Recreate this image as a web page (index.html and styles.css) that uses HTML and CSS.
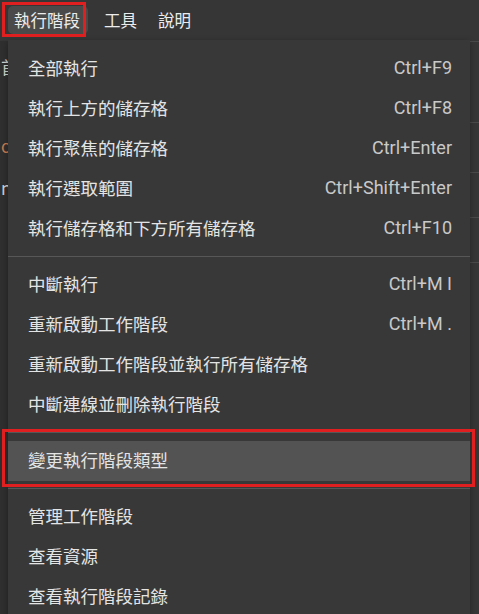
FILE: index.html
```html
<!DOCTYPE html>
<html lang="zh-Hant">
<head>
<meta charset="utf-8">
<link rel="stylesheet" href="styles.css">
</head>
<body>
<div class="app">
  <nav class="menubar">
    <span class="mb-item active">執行階段</span>
    <span class="mb-item">工具</span>
    <span class="mb-item">說明</span>
  </nav>
  <div class="page">
    <div class="gutter"></div>
    <div class="cells">
      <div class="cell c1"><span class="peek">首</span></div>
      <div class="cell c2"><span class="peek orange">o</span></div>
      <div class="cell c3"><span class="peek">n</span></div>
      <div class="cell c4"></div>
      <div class="cell c5"></div>
    </div>
  </div>

  <div class="annot annot-top"></div>

  <div class="menu">
    <div class="group">
      <div class="item"><span>全部執行</span><span class="key">Ctrl+F9</span></div>
      <div class="item"><span>執行上方的儲存格</span><span class="key">Ctrl+F8</span></div>
      <div class="item"><span>執行聚焦的儲存格</span><span class="key">Ctrl+Enter</span></div>
      <div class="item"><span>執行選取範圍</span><span class="key">Ctrl+Shift+Enter</span></div>
      <div class="item"><span>執行儲存格和下方所有儲存格</span><span class="key">Ctrl+F10</span></div>
    </div>
    <div class="sep"></div>
    <div class="group">
      <div class="item"><span>中斷執行</span><span class="key">Ctrl+M I</span></div>
      <div class="item"><span>重新啟動工作階段</span><span class="key">Ctrl+M .</span></div>
      <div class="item"><span>重新啟動工作階段並執行所有儲存格</span></div>
      <div class="item"><span>中斷連線並刪除執行階段</span></div>
    </div>
    <div class="sep"></div>
    <div class="group">
      <div class="item hover"><span>變更執行階段類型</span></div>
    </div>
    <div class="sep"></div>
    <div class="group">
      <div class="item"><span>管理工作階段</span></div>
      <div class="item"><span>查看資源</span></div>
      <div class="item"><span>查看執行階段記錄</span></div>
    </div>
  </div>

  <div class="annot annot-item"></div>
</div>
</body>
</html>
```
FILE: styles.css
```css
* { box-sizing: border-box; }
html, body {
  margin: 0;
  padding: 0;
  background: #363636;
  width: 479px;
  height: 614px;
  overflow: hidden;
}
body {
  font-family: "Noto Sans CJK TC", "Noto Sans", sans-serif;
  color: #e3e3e3;
}
.app {
  position: relative;
  width: 479px;
  height: 614px;
}
.menubar {
  height: 41px;
  display: flex;
  align-items: center;
  padding: 0 0 2px 8px;
  background: #363636;
}
.mb-item {
  font-size: 16.5px;
  line-height: 28px;
  padding: 0 6px;
  border-radius: 5px;
  color: #ececec;
  margin-right: 9px;
}
.mb-item.active {
  background: #4a4a4a;
  padding: 0 8px 0 6px;
  margin-right: 10px;
}
.page {
  display: flex;
  height: 573px;
}
.gutter {
  width: 9px;
  background: #2f2f2f;
  border-right: 1px solid #292929;
}
.cells {
  flex: 1;
  display: flex;
  flex-direction: column;
}
.cell {
  border-top: 1px solid #4a4a4a;
  position: relative;
}
.c1 { height: 81px; }
.c2 { height: 50px; }
.c3 { height: 45px; }
.c4 { height: 45px; }
.c5 { flex: 1; }
.peek {
  position: absolute;
  left: -8px;
  font-size: 17px;
  color: #cfcfcf;
}
.c1 .peek { top: 12px; }
.c2 .peek { top: 10px; }
.c3 .peek { top: 2px; }
.orange { color: #c97a4e; }

.menu {
  position: absolute;
  left: 8px;
  top: 40px;
  width: 462px;
  height: 580px;
  background: #383838;
  padding-top: 9px;
  box-shadow: 0 2px 6px rgba(0,0,0,0.35);
}
.item {
  height: 40px;
  display: flex;
  align-items: center;
  justify-content: space-between;
  padding: 0 18px 3px 20px;
  font-size: 17.5px;
  color: #e4e4e4;
}
.item.hover { background: #535353; }
.key {
  font-family: Roboto, "Liberation Sans", sans-serif;
  font-size: 18px;
  color: #c9c9c9;
}
.sep {
  height: 1px;
  background: #575757;
  margin: 7px 0 8px;
}
.annot {
  position: absolute;
  border: 3px solid #e02020;
}
.annot-top {
  left: 2px;
  top: 2px;
  width: 84px;
  height: 35px;
}
.annot-item {
  left: 2px;
  top: 429px;
  width: 473px;
  height: 58px;
}
```
